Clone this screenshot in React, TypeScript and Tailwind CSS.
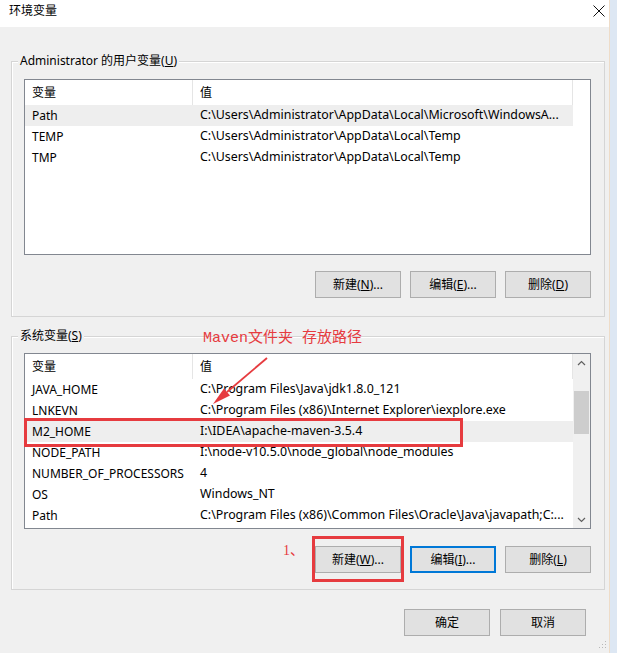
import React from "react";

type Row = { name: string; value: string; sel?: boolean };

const userRows: Row[] = [
  { name: "Path", value: "C:\\Users\\Administrator\\AppData\\Local\\Microsoft\\WindowsA...", sel: true },
  { name: "TEMP", value: "C:\\Users\\Administrator\\AppData\\Local\\Temp" },
  { name: "TMP", value: "C:\\Users\\Administrator\\AppData\\Local\\Temp" },
];

const sysRows: Row[] = [
  { name: "JAVA_HOME", value: "C:\\Program Files\\Java\\jdk1.8.0_121" },
  { name: "LNKEVN", value: "C:\\Program Files (x86)\\Internet Explorer\\iexplore.exe" },
  { name: "M2_HOME", value: "I:\\IDEA\\apache-maven-3.5.4", sel: true },
  { name: "NODE_PATH", value: "I:\\node-v10.5.0\\node_global\\node_modules" },
  { name: "NUMBER_OF_PROCESSORS", value: "4" },
  { name: "OS", value: "Windows_NT" },
  { name: "Path", value: "C:\\Program Files (x86)\\Common Files\\Oracle\\Java\\javapath;C:..." },
];

function Btn({ pre, k, post, focus }: { pre: string; k?: string; post?: string; focus?: boolean }) {
  return (
    <div
      className={
        focus
          ? "w-[86px] h-[27px] flex items-center justify-center bg-[#e1e1e1] border-2 border-[#0078d7]"
          : "w-[86px] h-[27px] flex items-center justify-center bg-[#e1e1e1] border border-[#adadad]"
      }
    >
      <span className="leading-[16px]">
        {pre}
        {k && <u>{k}</u>}
        {post}
      </span>
    </div>
  );
}

function Chevron({ up }: { up?: boolean }) {
  return (
    <svg width="9" height="6" viewBox="0 0 9 6">
      <polyline
        points={up ? "1,5 4.5,1.5 8,5" : "1,1 4.5,4.5 8,1"}
        fill="none"
        stroke="#606060"
        strokeWidth="1.2"
      />
    </svg>
  );
}

function VarList({ rows, scroll }: { rows: Row[]; scroll?: boolean }) {
  return (
    <div className="h-[176px] border border-[#828790] bg-white flex">
      <div className="w-[548px] flex flex-col">
        <div className="h-[25px] flex">
          <div className="w-[168px] pl-[7px] flex items-center border-r border-[#e5e5e5]">变量</div>
          <div className="flex-1 pl-[7px] flex items-center border-r border-[#e5e5e5]">值</div>
        </div>
        {rows.map((r) => (
          <div key={r.name} className={r.sel ? "h-[21px] flex items-center bg-[#eeeeee]" : "h-[21px] flex items-center"}>
            <div className="w-[168px] pl-[7px] whitespace-nowrap">{r.name}</div>
            <div className="flex-1 pl-[7px] whitespace-nowrap overflow-hidden text-[12.4px]">{r.value}</div>
          </div>
        ))}
      </div>
      {scroll && (
        <div className="w-[17px] bg-[#f0f0f0] flex flex-col">
          <div className="h-[17px] flex items-center justify-center">
            <Chevron up />
          </div>
          <div className="flex-1">
            <div className="mt-[20px] mx-[1px] h-[43px] bg-[#cdcdcd]" />
          </div>
          <div className="h-[17px] flex items-center justify-center">
            <Chevron />
          </div>
        </div>
      )}
    </div>
  );
}

export default function App() {
  return (
    <div className="relative w-[617px] h-[653px] flex bg-[#dde7f3] overflow-hidden text-[12px] text-black font-['Noto_Sans','Noto_Sans_CJK_SC',sans-serif]">
      <div className="w-[610px] h-full flex flex-col bg-[#f0f0f0] border-r border-[#eedcc8]">
        {/* title bar */}
        <div className="h-[27px] bg-white flex items-start justify-between pl-[9px] pr-[4px]">
          <span className="mt-[3px] leading-[16px]">环境变量</span>
          <svg className="mt-[5px]" width="12" height="12" viewBox="0 0 12 12">
            <path d="M0.5 0.5 L11.5 11.5 M11.5 0.5 L0.5 11.5" stroke="#111" strokeWidth="1" />
          </svg>
        </div>

        <div className="flex-1 flex flex-col pl-[11px] pr-[4px]">
          {/* user vars */}
          <div className="mt-[34px] border border-[#d5d5d5] shadow-[inset_1px_1px_0_#fff] flex flex-col pl-[12px] pr-[13px] pb-[18px]">
            <span className="-mt-[9px] -ml-[6px] self-start px-[2px] bg-[#f0f0f0] leading-[16px]">
              Administrator 的用户变量(<u>U</u>)
            </span>
            <div className="mt-[10px]">
              <VarList rows={userRows} />
            </div>
            <div className="mt-[16px] flex justify-end gap-[9px]">
              <Btn pre="新建(" k="N" post=")..." />
              <Btn pre="编辑(" k="E" post=")..." />
              <Btn pre="删除(" k="D" post=")" />
            </div>
          </div>

          {/* system vars */}
          <div className="mt-[19px] border border-[#d5d5d5] shadow-[inset_1px_1px_0_#fff] flex flex-col pl-[12px] pr-[13px] pb-[16px]">
            <span className="-mt-[9px] -ml-[6px] self-start px-[2px] bg-[#f0f0f0] leading-[16px]">
              系统变量(<u>S</u>)
            </span>
            <div className="mt-[9px]">
              <VarList rows={sysRows} scroll />
            </div>
            <div className="mt-[17px] flex justify-end gap-[9px]">
              <Btn pre="新建(" k="W" post=")..." />
              <Btn pre="编辑(" k="I" post=")..." focus />
              <Btn pre="删除(" k="L" post=")" />
            </div>
          </div>

          <div className="mt-[19px] flex justify-end gap-[10px] pr-[19px]">
            <Btn pre="确定" />
            <Btn pre="取消" />
          </div>
        </div>
      </div>

      {/* annotations drawn over the dialog */}
      <span className="absolute left-[203px] top-[330px] text-[15px] leading-[18px] text-[#e63b3f] whitespace-nowrap font-['Liberation_Mono','Noto_Sans_CJK_SC',monospace]">
        Maven文件夹 存放路径
      </span>
      <div className="absolute left-[24px] top-[418px] w-[439px] h-[29px] border-[3px] border-[#e63b3f]" />
      <span className="absolute left-[283px] top-[542px] text-[14px] leading-[18px] text-[#e63b3f] font-['Liberation_Serif','Noto_Sans_CJK_SC',serif]">
        1、
      </span>
      <div className="absolute left-[312px] top-[536px] w-[92px] h-[46px] border-[3px] border-[#e63b3f]" />
      <svg className="absolute left-0 top-0 pointer-events-none" width="617" height="653" viewBox="0 0 617 653">
        <line x1="267" y1="358" x2="227" y2="392" stroke="#e63b3f" strokeWidth="1.8" />
        <polygon points="213,404 230,395.5 224,388.5" fill="#e63b3f" />
        <g fill="#b8b8b8">
          <rect x="605" y="641" width="1" height="1" />
          <rect x="602" y="644" width="1" height="1" />
          <rect x="605" y="644" width="1" height="1" />
          <rect x="599" y="647" width="1" height="1" />
          <rect x="602" y="647" width="1" height="1" />
          <rect x="605" y="647" width="1" height="1" />
        </g>
      </svg>
    </div>
  );
}
